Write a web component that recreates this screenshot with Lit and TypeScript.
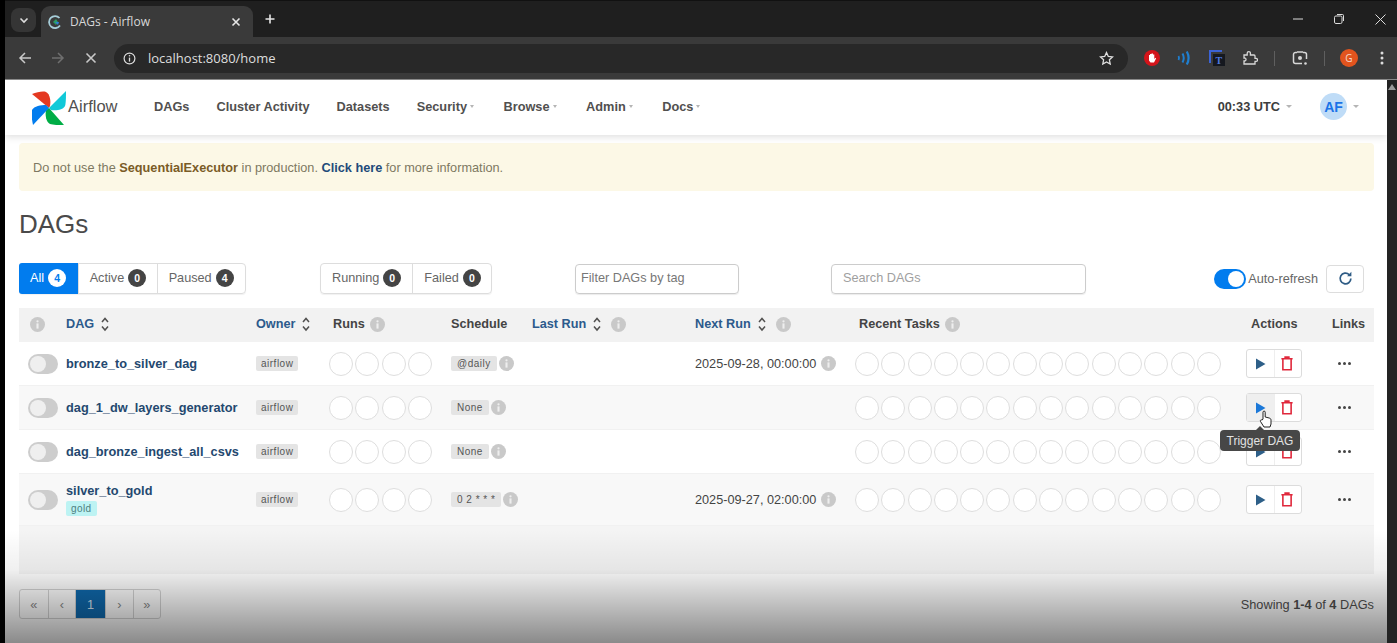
import { LitElement, html, css, svg } from "lit";
import { customElement } from "lit/decorators.js";

const info = (cls = "") => html`<svg class="info ${cls}" viewBox="0 0 16 16"><circle cx="8" cy="8" r="8" fill="#c9c9c9"/><circle cx="8" cy="4.6" r="1.2" fill="#eee"/><rect x="6.9" y="6.8" width="2.2" height="5.6" fill="#eee"/></svg>`;
const sort = html`<svg class="sort" viewBox="0 0 10 16"><path d="M2 6l3-3.6L8 6M2 10.5l3 3.6 3-3.6" fill="none" stroke="#51504f" stroke-width="1.5"/></svg>`;
const play = html`<svg class="ic" viewBox="0 0 14 14"><path d="M3 1.5l9.5 5.5L3 12.5z" fill="currentColor"/></svg>`;
const trash = html`<svg class="ic trash" viewBox="0 0 14 16"><path d="M1 3h12M5 3V1.2h4V3M2.6 3.6v11h8.8v-11" fill="none" stroke="#e0283c" stroke-width="1.7"/></svg>`;

const logo = svg`
  <path d="M0 3C5 1 11 0 14 1c4 2 5 9 4 14l-1 2z" fill="#e43921"/>
  <path d="M34 0c0 5 0 12-1 15-2 4-9 5-14 4l-2-2z" fill="#11c9d8"/>
  <path d="M32 34c-5 0-11 0-14-1-4-2-5-9-4-14l3-2z" fill="#00ad46"/>
  <path d="M1 34c-1-5-2-11-1-15 2-4 9-5 14-5l3 3z" fill="#017cee"/>`;

interface Dag { name: string; sched: string; next?: string; tag?: string; hover?: boolean; }
const DAGS: Dag[] = [
  { name: "bronze_to_silver_dag", sched: "@daily", next: "2025-09-28, 00:00:00" },
  { name: "dag_1_dw_layers_generator", sched: "None", hover: true },
  { name: "dag_bronze_ingest_all_csvs", sched: "None" },
  { name: "silver_to_gold", sched: "0 2 * * *", next: "2025-09-27, 02:00:00", tag: "gold" },
];

@customElement("app-root")
export class AppRoot extends LitElement {
  static styles = css`
    :host { display: flex; flex-direction: column; width: 1397px; height: 643px; overflow: hidden; background: #000; padding-left: 5px; box-sizing: border-box; font-family: "Liberation Sans", Arial, sans-serif; color: #51504f; }
    * { box-sizing: border-box; }
    svg { display: block; flex: none; }

    .tabstrip { height: 37px; flex: none; background: #1f1f1f; display: flex; align-items: flex-end; padding-left: 6px; border-top: 1px solid #111; position: relative; }
    .tabmenu { width: 25px; height: 24px; border-radius: 8px; background: #353535; display: flex; align-items: center; justify-content: center; margin: 0 5px 5px 0; }
    .tab { width: 212px; height: 31px; background: #3a3a3a; border-radius: 9px 9px 0 0; display: flex; align-items: center; padding: 0 12px 0 7px; gap: 8px; color: #d8d8d8; font: 12px "Open Sans", sans-serif; }
    .tab span { flex: 1; }
    .newtab { margin: 0 0 6px 12px; height: 24px; display: flex; align-items: center; }
    .winctl { margin-left: auto; height: 36px; display: flex; align-items: center; align-self: flex-start; gap: 29px; padding-right: 10px; }

    .toolbar { height: 43px; flex: none; background: #3a3a3a; display: flex; align-items: center; padding: 0 10px 0 13px; border-bottom: 1px solid #8a8a8a; }
    .navbtns { display: flex; gap: 19px; width: 96px; }
    .omni { width: 1014px; height: 29px; background: #282828; border-radius: 15px; display: flex; align-items: center; padding: 0 14px 0 9px; gap: 12px; color: #dedede; font: 13px "Open Sans", sans-serif; }
    .omni span { flex: 1; }
    .exts { display: flex; align-items: center; margin-left: 16px; }
    .ext { width: 16px; height: 16px; }
    .sep { width: 1px; height: 15px; background: #5f5f5f; }
    .prof { width: 18px; height: 18px; border-radius: 50%; background: #e2541e; color: #f6d9cc; font: 10px "Open Sans", sans-serif; display: flex; align-items: center; justify-content: center; }

    .view { flex: 1; display: flex; min-height: 0; }
    .page { flex: 1; background: #fff; position: relative; overflow: hidden; }
    .scroll { width: 10px; background: #232323; flex: none; display: flex; justify-content: center; padding-top: 4px; }
    .scroll i { border: 4px solid transparent; border-top: 0; border-bottom: 6px solid #9a9a9a; height: 0; }

    nav { height: 55px; background: #fff; box-shadow: 0 2px 7px rgba(0,0,0,.13); display: flex; align-items: center; padding: 0 28px 2px 27px; position: relative; font-size: 12.75px; font-weight: 700; }
    .brand { display: flex; align-items: center; gap: 2px; font-size: 16.5px; font-weight: 400; width: 122px; }
    .brand svg { margin-top: 2px; }
    .menu { display: flex; gap: 27px; }
    .menu div, .clock { display: flex; align-items: center; gap: 3px; }
    .caret { width: 0; height: 0; border: 2px solid transparent; border-top: 3px solid #b5b5b5; border-bottom: 0; }
    .menu .caret { margin-right: 2.5px; }
    .clock .caret, .user .caret { border-width: 3px; border-bottom: 0; }
    .clock { margin-left: auto; color: #3d3d3d; gap: 6px; }
    .user { display: flex; align-items: center; gap: 6px; margin-left: 28px; }
    .avatar { width: 27px; height: 27px; border-radius: 50%; background: #bfdcf7; color: #1a73e8; font-size: 14px; display: flex; align-items: center; justify-content: center; }

    main { padding: 8px 13px 0 14px; }
    .alert { height: 48px; background: #fcf8e6; border-radius: 4px; display: flex; align-items: center; padding-left: 14px; font-size: 12.72px; color: #7e7862; white-space: pre; }
    .alert b { color: #7a5c26; }
    .alert a { color: #1f4b7a; font-weight: 700; }
    h1 { font-size: 26px; font-weight: 400; line-height: 30px; margin: 18px 0 24px; color: #4a4a4a; }

    .filters { display: flex; align-items: center; height: 31px; font-size: 12.7px; margin-bottom: 14px; }
    .group { display: flex; height: 31px; border: 1px solid #ddd; border-radius: 4px; box-shadow: 0 1px 1px rgba(0,0,0,.06); }
    .group div { display: flex; align-items: center; gap: 4px; padding: 0 11px 2px; border-left: 1px solid #ddd; color: #666; }
    .group div:first-child { border-left: 0; }
    .group .on { background: #017cee; color: #fff; border-radius: 3px 0 0 3px; margin: -1px 0 -1px -1px; }
    .cnt { min-width: 18px; height: 18px; border-radius: 9px; background: #444; color: #fff; font-size: 10.5px; font-weight: 700; display: flex; align-items: center; justify-content: center; }
    .on .cnt { background: #fff; color: #017cee; }
    .g1 { width: 227px; margin-right: 74px; }
    .g2 { width: 172px; margin-right: 83px; }
    .g1 div:nth-child(1) { width: 59px; }
    .g1 div:nth-child(2) { width: 79px; }
    .g1 div:nth-child(3) { width: 89px; }
    .g2 div:nth-child(1) { width: 92px; }
    .g2 div:nth-child(2) { width: 80px; }
    .input { height: 30px; border: 1px solid #ccc; border-radius: 4px; display: flex; align-items: center; color: #777; padding-bottom: 2px; box-shadow: 0 1px 1px rgba(0,0,0,.08); }
    .tagf { width: 164px; padding-left: 5px; margin-right: 92px; }
    .search { width: 255px; padding-left: 11px; color: #a0a0a0; }
    .auto { margin-left: auto; display: flex; align-items: center; gap: 2px; color: #666; }
    .refresh { width: 38px; height: 28px; margin-left: 8px; margin-right: 10px; border: 1px solid #ddd; border-radius: 4px; display: flex; align-items: center; justify-content: center; }
    .sw { width: 32px; height: 20px; border-radius: 10px; background: #017cee; display: flex; justify-content: flex-end; align-items: center; padding: 0 2px; }
    .sw i { width: 16px; height: 16px; border-radius: 50%; background: #fff; }
    .sw.off { width: 31px; background: #cdcdcd; justify-content: flex-start; }
    .sw.off i { background: #efefef; }

    .table { background: #f4f4f4; height: 266px; font-size: 12.7px; }
    .row { display: grid; grid-template-columns: 39px 190px 77px 118px 81px 163px 164px 392px 81px 50px; align-items: center; height: 44px; background: #fff; border-bottom: 1px solid #f1f1f1; }
    .row > div { padding-left: 8px; display: flex; align-items: center; gap: 5px; min-width: 0; }
    .row.alt { background: #f8f8f8; }
    .row.tall { height: 52px; }
    .head { height: 34px; background: #f2f2f2; border: 0; font-weight: 700; color: #444; padding-bottom: 2px; }
    .head a { color: #2c5a8c; }
    .head .c0 { padding-left: 11px; }
    .info { width: 15px; height: 15px; }
    .sort { width: 10px; height: 16px; margin-left: 1px; }
    .head .sort { margin-right: 4px; }
    .row > .tog { padding-left: 9px; }
    .name { color: #24486f; font-weight: 700; font-size: 12.75px; white-space: nowrap; }
    .stack { flex-direction: column; align-items: flex-start !important; gap: 3px !important; }
    .tag { background: #bdf3f3; color: #4d8080; font-size: 10px; letter-spacing: .4px; height: 15px; padding: 0 5px; border-radius: 2px; display: flex; align-items: center; }
    .label { background: #e4e4e4; color: #555; font-size: 10px; letter-spacing: .5px; height: 15px; padding: 0 5px; border-radius: 2px; display: flex; align-items: center; white-space: pre; }
    .row > .sched { gap: 2px; }
    .sched .label { padding: 0 6px; }
    .row > .cir { padding-left: 4px; gap: 2.3px; }
    .cir i { width: 24px; height: 24px; border-radius: 50%; background: #fff; border: 1px solid #dedede; flex: none; }
    .next { color: #444; white-space: nowrap; }
    .row > .act { padding-left: 3px; position: relative; }
    .row > .act.top { z-index: 2; }
    .btns { display: flex; height: 29px; width: 56px; border: 1px solid #dcdcdc; border-radius: 3px; background: #fff; color: #2e5f88; }
    .btns div { flex: 1; display: flex; align-items: center; justify-content: center; }
    .btns div:first-child { border-right: 1px solid #eee; }
    .btns .hov { background: #efefef; color: #1b78d8; }
    .ic { width: 14px; height: 14px; }
    .trash { height: 15px; margin-right: 2px; }
    .dots { display: flex; gap: 2px; margin-left: 6px; }
    .dots i { width: 3px; height: 3px; border-radius: 50%; background: #444; }
    .tip { position: absolute; left: -23px; top: 37px; width: 80px; height: 21px; border-radius: 4px; background: #474747; color: #e2e2e2; font-size: 12px; display: flex; align-items: center; justify-content: center; white-space: nowrap; }
    .tip::before { content: ""; position: absolute; left: 36px; top: -4px; border: 4px solid transparent; border-top: 0; border-bottom-color: #474747; }
    .hand { position: absolute; left: 16px; top: 17px; width: 13px; height: 18px; }

    .foot { display: flex; align-items: center; justify-content: space-between; margin-top: 15px; font-size: 12.75px; }
    .pager { display: flex; height: 30px; border: 1px solid #d4d4d4; border-radius: 3px; }
    .pager div { width: 27.5px; display: flex; align-items: center; justify-content: center; color: #888; border-left: 1px solid #d4d4d4; }
    .pager div:first-child { border-left: 0; }
    .pager .cur { width: 30px; background: #0f69ad; color: #d8e8f4; }
    .shade { position: absolute; left: 0; right: 0; bottom: 0; height: 113px; pointer-events: none; background: linear-gradient(to bottom, rgba(0,0,0,0), rgba(0,0,0,.06) 35%, rgba(0,0,0,.46)); }
  `;

  private circles(n: number) {
    return Array.from({ length: n }, () => html`<i></i>`);
  }

  private renderRow(d: Dag, i: number) {
    return html`
      <div class="row ${i % 2 ? "alt" : ""} ${d.tag ? "tall" : ""}">
        <div class="tog"><span class="sw off"><i></i></span></div>
        <div class="${d.tag ? "stack" : ""}"><span class="name">${d.name}</span>${d.tag ? html`<span class="tag">${d.tag}</span>` : ""}</div>
        <div><span class="label">airflow</span></div>
        <div class="cir">${this.circles(4)}</div>
        <div class="sched"><span class="label">${d.sched}</span>${info()}</div>
        <div></div>
        <div>${d.next ? html`<span class="next">${d.next}</span>${info()}` : ""}</div>
        <div class="cir">${this.circles(14)}</div>
        <div class="act ${d.hover ? "top" : ""}">
          <div class="btns"><div class="${d.hover ? "hov" : ""}">${play}</div><div>${trash}</div></div>
          ${d.hover ? html`
            <div class="tip">Trigger DAG</div>
            <svg class="hand" viewBox="0 0 13 18"><path d="M4 9V2.2a1.1 1.1 0 0 1 2.2 0V7l4 1c1.3.4 1.8 1 1.8 2.2V14l-1 3H5L1.5 11.5c-.7-1.2.7-2.2 1.6-1.4z" fill="#fff" stroke="#222" stroke-width="1"/></svg>` : ""}
        </div>
        <div><span class="dots"><i></i><i></i><i></i></span></div>
      </div>`;
  }

  render() {
    return html`
      <div class="tabstrip">
        <div class="tabmenu"><svg width="10" height="10" viewBox="0 0 10 10"><path d="M1.5 3.5L5 7l3.5-3.5" fill="none" stroke="#ddd" stroke-width="1.6"/></svg></div>
        <div class="tab">
          <svg width="14" height="14" viewBox="0 0 14 14"><path d="M11.5 3A6 6 0 1 0 12 10.5" fill="none" stroke="#a6cdd8" stroke-width="1.8"/><path d="M5 7l3-3 2 3-2 3z" fill="#2a9c63"/><path d="M7 7h4l-1 3z" fill="#2f7fd8"/></svg>
          <span>DAGs - Airflow</span>
          <svg width="10" height="10" viewBox="0 0 10 10"><path d="M1.5 1.5l7 7M8.5 1.5l-7 7" stroke="#e6e6e6" stroke-width="1.6"/></svg>
        </div>
        <div class="newtab"><svg width="10" height="10" viewBox="0 0 10 10"><path d="M5 .5v9M.5 5h9" stroke="#e6e6e6" stroke-width="1.6"/></svg></div>
        <div class="winctl">
          <svg width="12" height="12" viewBox="0 0 12 12"><path d="M1 6h10" stroke="#ddd" stroke-width="1"/></svg>
          <svg width="12" height="12" viewBox="0 0 12 12"><rect x="1.5" y="3" width="7.5" height="7.5" rx="1.4" fill="none" stroke="#ddd"/><path d="M4 1.5h5.5a1 1 0 0 1 1 1V8" fill="none" stroke="#ddd"/></svg>
          <svg width="13" height="13" viewBox="0 0 13 13"><path d="M1.5 1.5l10 10M11.5 1.5l-10 10" stroke="#ddd" stroke-width="1"/></svg>
        </div>
      </div>

      <div class="toolbar">
        <div class="navbtns">
          <svg width="14" height="14" viewBox="0 0 14 14"><path d="M13 7H2M7 2L2 7l5 5" fill="none" stroke="#c9c9c9" stroke-width="1.5"/></svg>
          <svg width="14" height="14" viewBox="0 0 14 14"><path d="M1 7h11M7 2l5 5-5 5" fill="none" stroke="#6f6f6f" stroke-width="1.5"/></svg>
          <svg width="14" height="14" viewBox="0 0 14 14"><path d="M2.5 2.5l9 9M11.5 2.5l-9 9" stroke="#c9c9c9" stroke-width="1.6"/></svg>
        </div>
        <div class="omni">
          <svg width="13" height="13" viewBox="0 0 13 13"><circle cx="6.5" cy="6.5" r="5.4" fill="none" stroke="#ddd" stroke-width="1.2"/><path d="M6.5 5.6v4" stroke="#ddd" stroke-width="1.3"/><circle cx="6.5" cy="3.8" r=".8" fill="#ddd"/></svg>
          <span>localhost:8080/home</span>
          <svg width="15" height="15" viewBox="0 0 15 15"><path d="M7.5 1.5l1.8 3.9 4.2.5-3.1 2.9.8 4.2-3.7-2.1-3.7 2.1.8-4.2L1.5 5.9l4.2-.5z" fill="none" stroke="#e0e0e0" stroke-width="1.3"/></svg>
        </div>
        <div class="exts">
          <svg class="ext" viewBox="0 0 16 16"><circle cx="8" cy="8" r="8" fill="#d3141a"/><path d="M5 8V5h1v2-3h1.5v3-3.4H9V7V4.5h1.3V9l1.2-1.2.6.6L10 12.5H6.5L5 10.5z" fill="#fff"/></svg>
          <svg class="ext" style="margin-left:16px" viewBox="0 0 16 16"><path d="M2.5 6q1 2 0 4" fill="none" stroke="#1f7fd0" stroke-width="1.8"/><path d="M6.5 3.5q2.5 4.5 0 9" fill="none" stroke="#1f7fd0" stroke-width="2"/><path d="M10.8 1.5q3.6 6.5 0 13" fill="none" stroke="#1f7fd0" stroke-width="2.2"/></svg>
          <svg class="ext" style="margin-left:17px" viewBox="0 0 16 16"><path d="M1 13V1h12" fill="none" stroke="#3b63d6" stroke-width="2"/><rect x="4" y="4" width="12" height="12" fill="#15181f"/><text x="6.6" y="13.6" font-size="10" font-weight="700" font-family="Liberation Serif" fill="#4f7be0">T</text></svg>
          <svg class="ext" style="margin-left:17px" viewBox="0 0 16 16"><path d="M2 5h3.2V3.2a1.6 1.6 0 0 1 3.2 0V5H12a1 1 0 0 1 1 1v2.4h1a1.5 1.5 0 0 1 0 3h-1V14H2v-3h1a1.6 1.6 0 0 0 0-3H2z" fill="none" stroke="#d8d8d8" stroke-width="1.3"/></svg>
          <div class="sep" style="margin-left:16px"></div>
          <svg class="ext" style="margin-left:17px" viewBox="0 0 16 16"><path d="M5 2.5H3.5a2 2 0 0 0-2 2v7a2 2 0 0 0 2 2H10M11 2.5h1.5a2 2 0 0 1 2 2V9" fill="none" stroke="#d8d8d8" stroke-width="1.5"/><path d="M5 2h6" stroke="#d8d8d8" stroke-width="1.5"/><circle cx="8" cy="8" r="2" fill="#d8d8d8"/><circle cx="13.5" cy="13.5" r="1.3" fill="#d8d8d8"/></svg>
          <div class="sep" style="margin-left:16px"></div>
          <div class="prof" style="margin-left:15px">G</div>
          <svg width="4" height="14" style="margin-left:22px" viewBox="0 0 4 14"><circle cx="2" cy="2" r="1.5" fill="#ddd"/><circle cx="2" cy="7" r="1.5" fill="#ddd"/><circle cx="2" cy="12" r="1.5" fill="#ddd"/></svg>
        </div>
      </div>

      <div class="view">
        <div class="page">
          <nav>
            <div class="brand"><svg width="34" height="34" viewBox="0 0 34 34">${logo}</svg>Airflow</div>
            <div class="menu">
              <div>DAGs</div><div>Cluster Activity</div><div>Datasets</div>
              <div>Security<span class="caret"></span></div>
              <div>Browse<span class="caret"></span></div>
              <div>Admin<span class="caret"></span></div>
              <div>Docs<span class="caret"></span></div>
            </div>
            <div class="clock">00:33 UTC<span class="caret"></span></div>
            <div class="user"><div class="avatar">AF</div><span class="caret"></span></div>
          </nav>
          <main>
            <div class="alert">Do not use the <b>SequentialExecutor</b> in production. <a>Click here</a> for more information.</div>
            <h1>DAGs</h1>
            <div class="filters">
              <div class="group g1">
                <div class="on">All<span class="cnt">4</span></div>
                <div>Active<span class="cnt">0</span></div>
                <div>Paused<span class="cnt">4</span></div>
              </div>
              <div class="group g2">
                <div>Running<span class="cnt">0</span></div>
                <div>Failed<span class="cnt">0</span></div>
              </div>
              <div class="input tagf">Filter DAGs by tag</div>
              <div class="input search">Search DAGs</div>
              <div class="auto"><span class="sw"><i></i></span>Auto-refresh</div>
              <div class="refresh"><svg width="15" height="15" viewBox="0 0 14 14"><path d="M12 7a5 5 0 1 1-1.6-3.7" fill="none" stroke="#2f5c85" stroke-width="1.6"/><path d="M12.5 .8v4h-4z" fill="#2f5c85"/></svg></div>
            </div>
            <div class="table">
              <div class="row head">
                <div class="c0">${info()}</div>
                <div><a>DAG</a>${sort}</div>
                <div><a>Owner</a>${sort}</div>
                <div>Runs ${info()}</div>
                <div>Schedule</div>
                <div><a>Last Run</a>${sort}${info()}</div>
                <div><a>Next Run</a>${sort}${info()}</div>
                <div>Recent Tasks ${info()}</div>
                <div>Actions</div>
                <div>Links</div>
              </div>
              ${DAGS.map((d, i) => this.renderRow(d, i))}
            </div>
            <div class="foot">
              <div class="pager"><div>«</div><div>‹</div><div class="cur">1</div><div>›</div><div>»</div></div>
              <div>Showing <b>1-4</b> of <b>4</b> DAGs</div>
            </div>
          </main>
          <div class="shade"></div>
        </div>
        <div class="scroll"><i></i></div>
      </div>
    `;
  }
}
